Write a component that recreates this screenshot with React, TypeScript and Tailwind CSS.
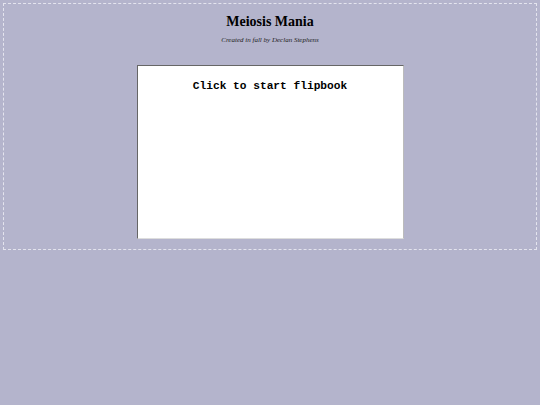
import React from 'react';

export default function App() {
    return (
        <div className="min-h-[405px] bg-[#b4b4cc] p-[3px]">
            <div className="border border-dashed border-[#e4e4ee] flex flex-col items-center pt-[9px] pb-[10px]">
                <h1
                    className="text-[14px] font-bold text-black leading-[18px]"
                    style={{ fontFamily: '"Liberation Serif", serif' }}
                >
                    Meiosis Mania
                </h1>
                <p
                    className="italic text-[7px] text-[#222] leading-[10px] mt-[4px]"
                    style={{ fontFamily: '"Liberation Serif", serif' }}
                >
                    Created in fall by Declan Stephens
                </p>
                {/* flipbook canvas */}
                <div className="mt-[20px] w-[267px] h-[174px] bg-white border border-t-[#666] border-l-[#666] border-r-[#bbb] border-b-[#ddd] flex justify-center cursor-pointer">
                    <span
                        className="mt-[13px] text-[11.2px] font-bold text-black leading-[14px]"
                        style={{ fontFamily: '"Liberation Mono", monospace' }}
                    >
                        Click to start flipbook
                    </span>
                </div>
            </div>
        </div>
    );
}
